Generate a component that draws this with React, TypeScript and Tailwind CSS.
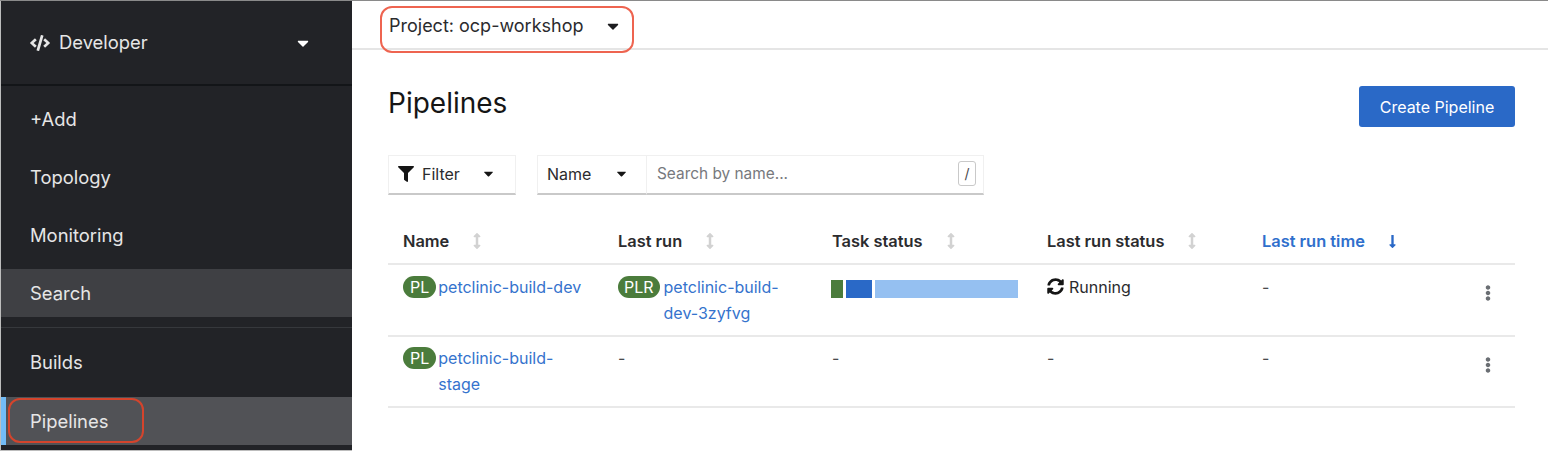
import React from "react";
import { FaCode, FaFilter, FaSyncAlt, FaCaretDown, FaLongArrowAltDown, FaArrowsAltV, FaEllipsisV } from "react-icons/fa";

const font = { fontFamily: "Inter, 'Noto Sans', sans-serif" };

function NavItem({ label, variant }: { label: string; variant?: "hover" | "active" }) {
  const bg = variant === "hover" ? "bg-[#3f4044]" : variant === "active" ? "bg-[#515256]" : "";
  return (
    <div className={`relative h-12 flex items-center pl-[29px] pt-[2px] text-[18.4px] text-[#e6e6e6] ${bg}`}>
      {variant === "active" && <div className="absolute left-0 top-0 bottom-0 w-[5px] bg-[#73bcf7]" />}
      {label}
    </div>
  );
}

function Head({ label, active }: { label: string; active?: boolean }) {
  return (
    <div className={`flex items-center text-[16.4px] font-semibold pl-[15px] pt-[4px] ${active ? "text-[#2f6fcc]" : "text-[#2b2b2e]"}`}>
      <span>{label}</span>
      {active ? (
        <FaLongArrowAltDown className="ml-[20px] text-[#2a69c7]" size={15} />
      ) : (
        <FaArrowsAltV className="ml-[20px] text-[#d2d2d2]" size={16} />
      )}
    </div>
  );
}

function Badge({ t }: { t: string }) {
  return (
    <span className={`inline-flex h-[22px] items-center justify-center shrink-0 rounded-full bg-[#4b7c3c] text-[16px] text-white ${t === "PLR" ? "px-[6px]" : "px-[7px]"}`}>
      {t}
    </span>
  );
}

function LinkCell({ badge, lines }: { badge: string; lines: string[] }) {
  return (
    <div className={`flex items-start pl-[15px] pt-[10px] ${badge === "PLR" ? "gap-[4px]" : "gap-[2px]"}`}>
      <Badge t={badge} />
      <div className="text-[16px] leading-[26px] text-[#3573cd] -mt-[2px]">
        {lines.map((l) => (
          <div key={l}>{l}</div>
        ))}
      </div>
    </div>
  );
}

function Dash() {
  return <div className="pl-[15px] pt-[8px] text-[16px] leading-[26px] text-[#4a4a4d]">-</div>;
}

function Kebab() {
  return (
    <div className="flex justify-end pr-[19px] pt-[19px] text-[#6a6e73]">
      <FaEllipsisV size={16} />
    </div>
  );
}

export default function App() {
  return (
    <div style={font} className="h-[452px] w-[1548px] overflow-hidden bg-white flex flex-col">
      <div className="h-px shrink-0 bg-[#8a8a8a]" />
      <div className="relative flex flex-1 min-h-0">
        <aside className="mb-px w-[352px] shrink-0 border-l border-b border-[#bdbdbd] bg-[#222327] flex flex-col">
          <div className="h-[85px] shrink-0 flex items-center pl-[29px] pr-[40px] border-b-2 border-[#131518] text-[#e6e6e6] text-[18.4px]">
            <FaCode size={20} />
            <span className="ml-[9px] flex-1">Developer</span>
            <FaCaretDown size={18} className="text-white" />
          </div>
          <div className="pt-[9px] flex flex-col gap-[10px]">
            <NavItem label="+Add" />
            <NavItem label="Topology" />
            <NavItem label="Monitoring" />
            <NavItem label="Search" variant="hover" />
          </div>
          <div className="mt-[10px] h-px bg-[#36383c]" />
          <div className="pt-[10px] flex flex-col gap-[11px]">
            <NavItem label="Builds" />
            <NavItem label="Pipelines" variant="active" />
          </div>
        </aside>

        <main className="flex-1 min-w-0 flex flex-col">
          <div className="relative h-[49px] shrink-0 border-b-2 border-[#e5e5e5] flex items-center pl-[37px] pt-[2px] text-[18px] text-[#2b2b2e]">
            <span>Project: ocp-workshop</span>
            <FaCaretDown size={18} className="ml-[20px] text-[#1c1c1f]" />
          </div>

          <div className="pl-[36px] pr-[33px] flex-1">
            <div className="flex items-start justify-between pt-[36px]">
              <h1 className="text-[28px] leading-[34px] font-normal text-[#151515]">Pipelines</h1>
              <button className="h-[41px] w-[156px] rounded-[3px] bg-[#2a69c7] text-[16px] text-white">Create Pipeline</button>
            </div>

            <div className="mt-[28px] flex h-[40px] text-[16px] text-[#2b2b2e]">
              <div className="w-[128px] flex items-center pl-[9px] pb-[2px] border border-[#f0f0f0] border-b-2 border-b-[#c9c9c9]">
                <FaFilter size={16} className="text-[#151515]" />
                <span className="ml-[8px]">Filter</span>
                <FaCaretDown size={15} className="ml-[21px] text-[#151515]" />
              </div>
              <div className="ml-[21px] w-[110px] flex items-center pl-[9px] pb-[2px] border border-[#f0f0f0] border-b-2 border-b-[#c9c9c9]">
                <span>Name</span>
                <FaCaretDown size={15} className="ml-[23px] text-[#151515]" />
              </div>
              <div className="w-[337px] flex items-center justify-between pl-[10px] pr-[7px] pb-[2px] border border-l-0 border-[#f0f0f0] border-b-2 border-b-[#c9c9c9]">
                <span className="text-[15.4px] text-[#77797d]">Search by name...</span>
                <span className="flex h-[25px] w-[18px] items-center justify-center rounded-[3px] border border-[#c9c9c9] text-[14px] text-[#4a4a4d]">/</span>
              </div>
            </div>

            <div className="mt-[20px] grid grid-cols-[215px_214px_215px_215px_215px_1fr] grid-rows-[48px_72px_73px]">
              <Head label="Name" />
              <Head label="Last run" />
              <Head label="Task status" />
              <Head label="Last run status" />
              <Head label="Last run time" active />
              <div />

              <div className="col-span-6 grid grid-cols-subgrid border-t-2 border-[#e9e9e9] pt-[1px]">
                <LinkCell badge="PL" lines={["petclinic-build-dev"]} />
                <LinkCell badge="PLR" lines={["petclinic-build-", "dev-3zyfvg"]} />
                <div className="pl-[14px] pt-[14px] flex items-start gap-[3px] h-[32px]">
                  <div className="h-[18px] w-[12px] bg-[#4b7c3c]" />
                  <div className="h-[18px] w-[26px] bg-[#2a69c7]" />
                  <div className="h-[18px] w-[143px] bg-[#95c0f1]" />
                </div>
                <div className="pl-[15px] pt-[8px] flex items-start gap-[5px] text-[16px] leading-[26px] text-[#2b2b2e]">
                  <FaSyncAlt size={17} className="mt-[4px] text-[#151515]" />
                  <span>Running</span>
                </div>
                <Dash />
                <Kebab />
              </div>

              <div className="col-span-6 grid grid-cols-subgrid border-t-2 border-b-2 border-[#e9e9e9]">
                <LinkCell badge="PL" lines={["petclinic-build-", "stage"]} />
                <Dash />
                <Dash />
                <Dash />
                <Dash />
                <div className="pt-[1px]">
                  <Kebab />
                </div>
              </div>
            </div>
          </div>
        </main>

        <div className="pointer-events-none absolute left-[380px] top-[5px] h-[47px] w-[254px] rounded-[12px] border-2 border-[#ee6450]" />
        <div className="pointer-events-none absolute left-[8px] top-[397px] h-[45px] w-[136px] rounded-[12px] border-2 border-[#d4442c]" />
      </div>
    </div>
  );
}
